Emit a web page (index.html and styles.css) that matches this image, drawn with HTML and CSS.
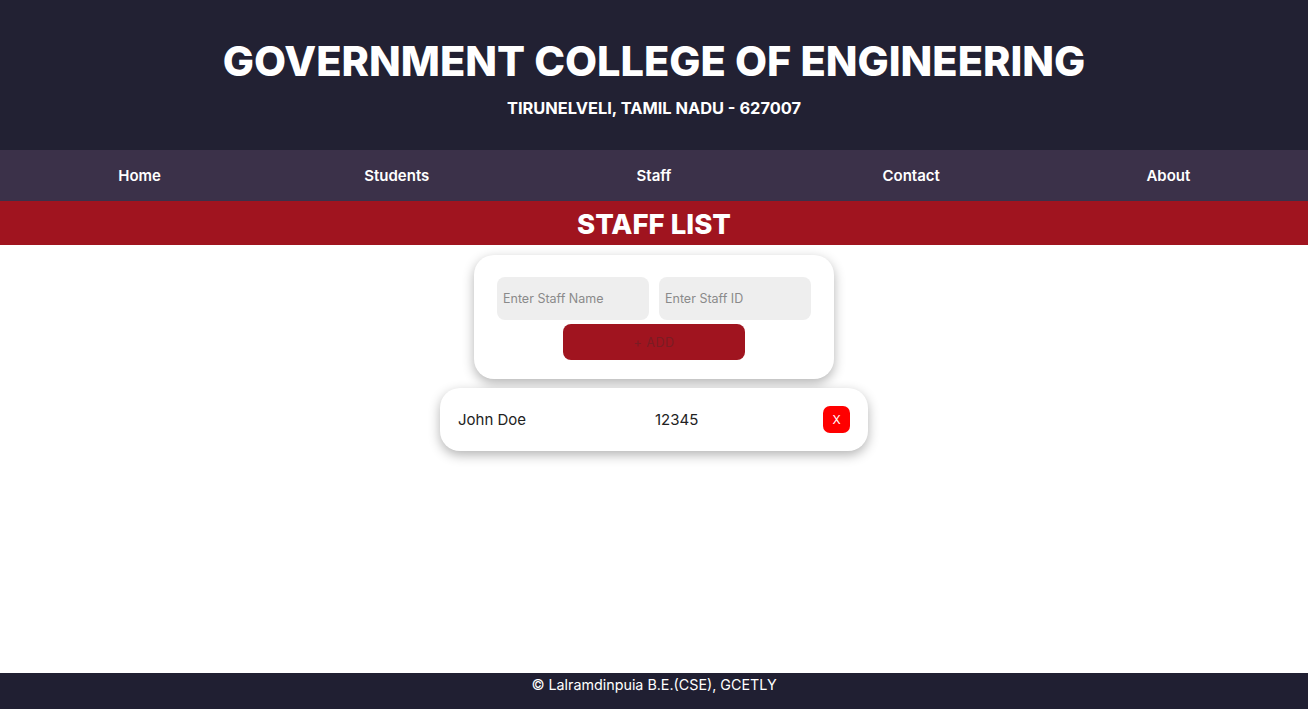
FILE: index.html
```html
<!DOCTYPE html>
<html lang="en">
<head>
<meta charset="utf-8">
<title>Staff List</title>
<link rel="stylesheet" href="styles.css">
</head>
<body>
<div class="page">
  <header class="header">
    <h1 class="title">GOVERNMENT COLLEGE OF ENGINEERING</h1>
    <p class="subtitle">TIRUNELVELI, TAMIL NADU - 627007</p>
  </header>
  <nav class="nav">
    <a class="nav-link" href="#">Home</a>
    <a class="nav-link" href="#">Students</a>
    <a class="nav-link" href="#">Staff</a>
    <a class="nav-link" href="#">Contact</a>
    <a class="nav-link" href="#">About</a>
  </nav>
  <div class="banner">STAFF LIST</div>
  <main class="main">
    <form class="form-card">
      <div class="inputs">
        <input class="field" type="text" placeholder="Enter Staff Name">
        <input class="field" type="text" placeholder="Enter Staff ID">
      </div>
      <button class="add-btn" type="button">+ ADD</button>
    </form>
    <div class="staff-item">
      <span class="staff-name">John Doe</span>
      <span class="staff-id">12345</span>
      <button class="del-btn" type="button">X</button>
    </div>
  </main>
  <footer class="footer">© Lalramdinpuia B.E.(CSE), GCETLY</footer>
</div>
</body>
</html>
```
FILE: styles.css
```css
* { box-sizing: border-box; }
html, body { margin: 0; padding: 0; }
body {
  font-family: "Inter", "Open Sans", "Liberation Sans", sans-serif;
  background: #ffffff;
  color: #222;
}
.page {
  min-height: 709px;
  display: flex;
  flex-direction: column;
}
.header {
  background: #222133;
  height: 150px;
  display: flex;
  flex-direction: column;
  align-items: center;
  padding-top: 36px;
}
.title {
  margin: 0;
  color: #fff;
  font-size: 41.5px;
  font-weight: 800;
  line-height: 50px;
  letter-spacing: 0;
}
.subtitle {
  margin: 10px 0 0;
  color: #fff;
  font-size: 16.4px;
  font-weight: 700;
  line-height: 24px;
}
.nav {
  background: #3b3149;
  height: 51px;
  display: grid;
  grid-template-columns: repeat(5, 1fr);
  align-items: center;
  padding: 0 11px;
}
.nav-link {
  color: #fff;
  text-decoration: none;
  font-size: 15px;
  font-weight: 600;
  text-align: center;
}
.banner {
  background: #a0141f;
  height: 44px;
  color: #fff;
  font-size: 27.5px;
  font-weight: 800;
  text-align: center;
  line-height: 46px;
}
.main {
  flex: 1;
  display: flex;
  flex-direction: column;
  align-items: center;
  padding-top: 10px;
}
.form-card {
  width: 360px;
  height: 124px;
  background: #fff;
  border-radius: 20px;
  box-shadow: 0 4px 12px rgba(0,0,0,0.3);
  padding: 22px 23px 0;
  display: flex;
  flex-direction: column;
  align-items: center;
}
.inputs {
  display: flex;
  gap: 10px;
}
.field {
  width: 152px;
  height: 43px;
  border: none;
  border-radius: 8px;
  background: #eeeeee;
  padding: 0 6px;
  font-family: inherit;
  font-size: 12.5px;
  color: #333;
  outline: none;
}
.field::placeholder { color: #8a8a8a; }
.add-btn {
  margin-top: 4px;
  width: 182px;
  height: 36px;
  border: none;
  border-radius: 8px;
  background: #a0141f;
  color: #7a1c23;
  font-family: inherit;
  font-size: 12.5px;
  letter-spacing: 0.5px;
}
.staff-item {
  margin-top: 9px;
  width: 428px;
  height: 63px;
  background: #fff;
  border-radius: 20px;
  box-shadow: 0 4px 12px rgba(0,0,0,0.3);
  display: flex;
  align-items: center;
  padding: 0 18px;
}
.staff-name {
  font-size: 15px;
  color: #222;
  width: 197px;
}
.staff-id {
  font-size: 15px;
  color: #222;
  flex: 1;
}
.del-btn {
  width: 27px;
  height: 27px;
  border: none;
  border-radius: 7px;
  background: #ff0000;
  color: #fff;
  font-family: inherit;
  font-size: 12px;
  padding: 0;
}
.footer {
  background: #201f32;
  height: 36px;
  color: #fff;
  font-size: 14.3px;
  text-align: center;
  line-height: 24px;
}
```
